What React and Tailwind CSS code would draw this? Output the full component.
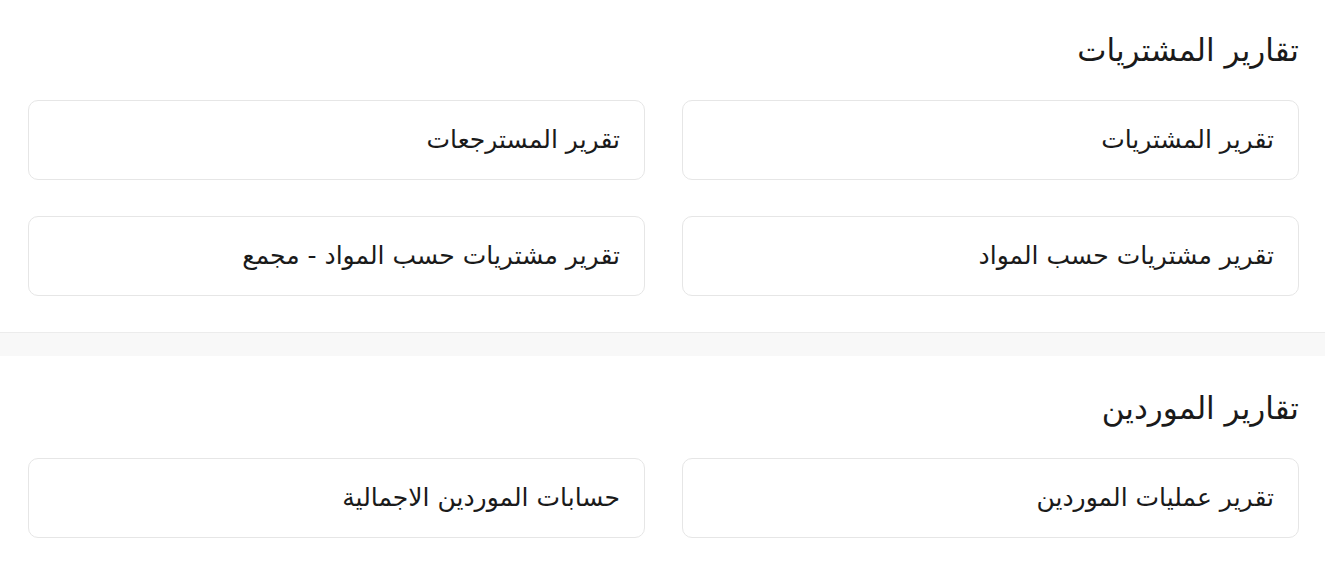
export default function App() {
  const Card = ({ children }) => (
    <div className="h-[80px] flex items-center px-[24px] rounded-[10px] border border-[#e6e6e6] bg-white text-[25px] text-[#1a1a1a]">
      {children}
    </div>
  );
  return (
    <div dir="rtl" className="min-h-[561px] bg-white" style={{ fontFamily: '"DejaVu Sans", sans-serif' }}>
      <section className="bg-white pt-[28px] pb-[36px] pr-[26px] pl-[28px] shadow-[0_1px_2px_rgba(0,0,0,0.08)] border-b border-[#ececec]">
        <h2 className="text-[31px] leading-[44px] text-[#1a1a1a] mb-[28px]">تقارير المشتريات</h2>
        <div className="grid grid-cols-2 gap-x-[37px] gap-y-[36px]">
          <Card>تقرير المشتريات</Card>
          <Card>تقرير المسترجعات</Card>
          <Card>تقرير مشتريات حسب المواد</Card>
          <Card>تقرير مشتريات حسب المواد - مجمع</Card>
        </div>
      </section>
      <div className="h-[23px] bg-[#f8f8f8]"></div>
      <section className="bg-white pt-[30px] pb-[24px] pr-[26px] pl-[28px]">
        <h2 className="text-[31px] leading-[44px] text-[#1a1a1a] mb-[28px]">تقارير الموردين</h2>
        <div className="grid grid-cols-2 gap-x-[37px] gap-y-[36px]">
          <Card>تقرير عمليات الموردين</Card>
          <Card>حسابات الموردين الاجمالية</Card>
        </div>
      </section>
    </div>
  );
}
